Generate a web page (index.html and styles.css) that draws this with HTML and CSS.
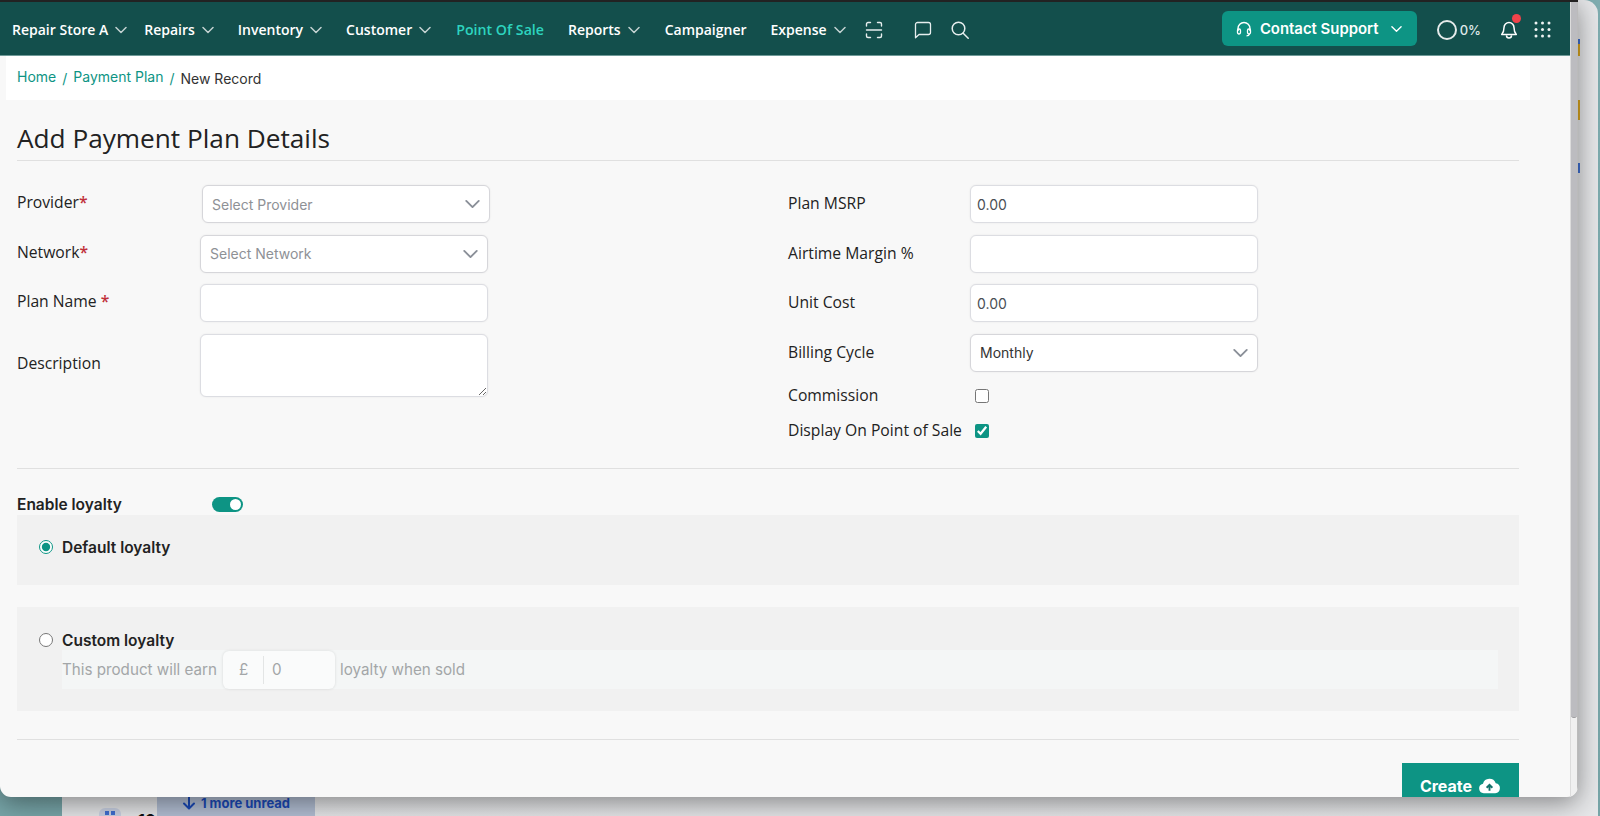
FILE: index.html
```html
<!DOCTYPE html>
<html lang="en">
<head>
<meta charset="utf-8">
<title>Add Payment Plan Details</title>
<link rel="stylesheet" href="styles.css">
</head>
<body>
<svg class="sprite" aria-hidden="true">
  <symbol id="chev" viewBox="0 0 12 8"><path d="M1 1.5 6 6.5 11 1.5" fill="none" stroke="currentColor" stroke-width="1.5" stroke-linecap="round" stroke-linejoin="round"/></symbol>
</svg>

<div class="backwin">
  <span class="tick tick-y1"></span><span class="tick tick-y2"></span><span class="tick tick-b1"></span><span class="tick tick-b2"></span>
  <div class="avatar"></div>
  <div class="count">10</div>
  <div class="unread">
    <svg class="unread-arrow" viewBox="0 0 14 14"><path d="M7 1v11M2 7.5 7 12.5 12 7.5" fill="none" stroke="currentColor" stroke-width="2" stroke-linecap="round" stroke-linejoin="round"/></svg>
    <span>1 more unread</span>
  </div>
</div>

<div class="window">
  <div class="main">
    <header class="topbar">
      <nav class="nav">
        <a class="nav-item nav-store">Repair Store A <svg class="chev"><use href="#chev"/></svg></a>
        <a class="nav-item">Repairs <svg class="chev"><use href="#chev"/></svg></a>
        <a class="nav-item">Inventory <svg class="chev"><use href="#chev"/></svg></a>
        <a class="nav-item">Customer <svg class="chev"><use href="#chev"/></svg></a>
        <a class="nav-item nav-active">Point Of Sale</a>
        <a class="nav-item">Reports <svg class="chev"><use href="#chev"/></svg></a>
        <a class="nav-item nav-campaigner">Campaigner</a>
        <a class="nav-item">Expense <svg class="chev"><use href="#chev"/></svg></a>
      </nav>
      <div class="tools">
        <svg class="tool tool-scan" viewBox="0 0 18 18"><path d="M1.500 5V3a1.500 1.500 0 0 1 1.500-1.500h2.500M12.500 1.500H15A1.500 1.500 0 0 1 16.500 3v2M1.500 9h15M1.500 13v2A1.500 1.500 0 0 0 3 16.500h2.500M12.500 16.500H15a1.500 1.500 0 0 0 1.500-1.500v-2" fill="none" stroke="currentColor" stroke-width="1.400" stroke-linecap="round"/></svg>
        <svg class="tool tool-chat" viewBox="0 0 18 18"><path d="M3.500 1.500h11a2 2 0 0 1 2 2v8a2 2 0 0 1-2 2H5L1.500 16.800V3.500a2 2 0 0 1 2-2Z" fill="none" stroke="currentColor" stroke-width="1.300" stroke-linejoin="round"/></svg>
        <svg class="tool tool-search" viewBox="0 0 18 18"><circle cx="7.500" cy="7.500" r="6.300" fill="none" stroke="currentColor" stroke-width="1.500"/><path d="m12.200 12.200 5 5" stroke="currentColor" stroke-width="1.500" stroke-linecap="round"/></svg>
      </div>
      <div class="right-tools">
        <button class="support">
          <svg class="support-ico" viewBox="0 0 16 16"><path d="M2 10V7.500a6 6 0 0 1 12 0V10" fill="none" stroke="currentColor" stroke-width="1.400"/><rect x="1.500" y="8" width="3" height="5" rx="1.400" fill="none" stroke="currentColor" stroke-width="1.300"/><rect x="11.500" y="8" width="3" height="5" rx="1.400" fill="none" stroke="currentColor" stroke-width="1.300"/><path d="M13.500 13c-.3 1.300-1.300 1.800-3 1.800" fill="none" stroke="currentColor" stroke-width="1.200"/></svg>
          <span>Contact Support</span>
          <svg class="chev chev-support"><use href="#chev"/></svg>
        </button>
        <div class="progress"><span class="ring"></span><span>0%</span></div>
        <div class="bell">
          <svg class="bell-ico" viewBox="0 0 18 20"><path d="M9 2.500a5 5 0 0 0-5 5c0 4-1 5.500-2.300 7h14.600C15 13 14 11.500 14 7.500a5 5 0 0 0-5-5ZM6.500 15.500a2.500 2.500 0 0 0 5 0" fill="none" stroke="currentColor" stroke-width="1.500" stroke-linejoin="round"/></svg>
          <span class="dot"></span>
        </div>
        <svg class="apps" viewBox="0 0 17 17" fill="currentColor"><circle cx="2" cy="2" r="1.500"/><circle cx="8.500" cy="2" r="1.500"/><circle cx="15" cy="2" r="1.500"/><circle cx="2" cy="8.500" r="1.500"/><circle cx="8.500" cy="8.500" r="1.500"/><circle cx="15" cy="8.500" r="1.500"/><circle cx="2" cy="15" r="1.500"/><circle cx="8.500" cy="15" r="1.500"/><circle cx="15" cy="15" r="1.500"/></svg>
      </div>
    </header>

    <div class="crumbs">
      <a>Home</a><i>/</i><a>Payment Plan</a><i>/</i><span>New Record</span>
    </div>

    <div class="content">
      <h1 class="title">Add Payment Plan Details</h1>

      <section class="form-grid">
        <div class="col col-left">
          <div class="row"><label class="lbl">Provider<b>*</b></label><div class="select select-provider placeholder">Select Provider<svg class="chev chev-sel"><use href="#chev"/></svg></div></div>
          <div class="row"><label class="lbl">Network<b>*</b></label><div class="select placeholder">Select Network<svg class="chev chev-sel"><use href="#chev"/></svg></div></div>
          <div class="row"><label class="lbl">Plan Name <b>*</b></label><input class="input" type="text"></div>
          <div class="row"><label class="lbl">Description</label><textarea class="input area"></textarea></div>
        </div>
        <div class="col col-right">
          <div class="row"><label class="lbl">Plan MSRP</label><input class="input" type="text" value="0.00"></div>
          <div class="row"><label class="lbl">Airtime Margin %</label><input class="input" type="text"></div>
          <div class="row"><label class="lbl">Unit Cost</label><input class="input" type="text" value="0.00"></div>
          <div class="row"><label class="lbl">Billing Cycle</label><div class="select value">Monthly<svg class="chev chev-sel"><use href="#chev"/></svg></div></div>
          <div class="row row-check row-commission"><label class="lbl">Commission</label><input class="check" type="checkbox"></div>
          <div class="row row-check"><label class="lbl">Display On Point of Sale</label><input class="check" type="checkbox" checked></div>
        </div>
      </section>

      <section class="loyalty">
        <div class="enable">
          <span class="enable-lbl">Enable loyalty</span>
          <span class="toggle"><span class="knob"></span></span>
        </div>
        <div class="panel panel-default">
          <label class="radio-row"><input class="radio" type="radio" name="loyalty" checked><span>Default loyalty</span></label>
        </div>
        <div class="panel panel-custom">
          <label class="radio-row"><input class="radio" type="radio" name="loyalty"><span>Custom loyalty</span></label>
          <div class="earn">
            <span>This product will earn</span>
            <div class="earn-input"><span class="cur">£</span><span class="earn-val">0</span></div>
            <span>loyalty when sold</span>
          </div>
        </div>
      </section>

      <div class="actions">
        <button class="create">Create
          <svg class="cloud" viewBox="0 0 24 16"><path d="M6 15.500a5 5 0 0 1-.8-9.900A7 7 0 0 1 18.500 5a5.300 5.300 0 0 1-.5 10.500Z" fill="#fff"/><path d="M12 13V7.500M9 9.800 12 6.800 15 9.800" fill="none" stroke="#14716b" stroke-width="2"/></svg>
        </button>
      </div>
    </div>
  </div>
  <div class="scrollbar"><div class="thumb"></div></div>
</div>
</body>
</html>
```

FILE: styles.css
```css
* { box-sizing: border-box; }
html, body { margin: 0; height: 100%; }
body {
  position: relative;
  height: 816px;
  overflow: hidden;
  background: linear-gradient(#7fadb0, #77a5a8);
  font-family: "Open Sans", "Liberation Sans", sans-serif;
  color: #212529;
}
.sprite { display: none; }

/* desktop behind */
.backwin {
  position: absolute;
  left: 62px; top: 0; width: 1536px; height: 840px;
  background: linear-gradient(90deg, #e4e5e7, #e6e7e9);
  border-radius: 14px;
  overflow: hidden;
}
.tick { position: absolute; left: 1516px; width: 2px; }
.tick-y1 { top: 44px; height: 12px; background: #d9a520; }
.tick-y2 { top: 100px; height: 20px; background: #d9a520; }
.tick-b1 { top: 39px; height: 5px; background: #3f6fd0; }
.tick-b2 { top: 163px; height: 10px; background: #3f6fd0; }
.avatar { position: absolute; left: 37px; top: 808px; width: 22px; height: 22px; border-radius: 6px; background: #c8d0e2; }
.avatar::before { content: ""; position: absolute; left: 6px; top: 3px; width: 4px; height: 4px; background: #3f6fd0; box-shadow: 6px 0 #3f6fd0; }
.count { position: absolute; left: 76px; top: 810px; font: 700 16px/20px Inter, sans-serif; color: #111; }
.unread {
  position: absolute; left: 95px; top: 780px; width: 158px; height: 36px;
  background: #b2bed3; color: #1a4ab8;
  display: flex; align-items: center; justify-content: center; gap: 5px;
  padding-top: 10px;
  font: 700 13px/16px Inter, sans-serif;
}
.unread-arrow { width: 14px; height: 14px; }

/* front window */
.window {
  position: absolute;
  left: 0; top: 0; width: 1578px; height: 797px;
  display: flex;
  background: #f8f8f8;
  border-radius: 0 0 11px 11px;
  border-top: 2px solid #222;
  overflow: hidden;
  box-shadow: 0 6px 26px rgba(0,0,0,.42);
}
.main { width: 1570px; flex: none; display: flex; flex-direction: column; }
.scrollbar { flex: 1; background: #f0f0f0; border-left: 1px solid #dcdcdc; border-right: 1px solid #bbb; }
.thumb { height: 716px; background: #bcbcc0; border-radius: 0 0 5px 5px; border-bottom: 1px solid #9a9a9e; }

/* top bar */
.topbar {
  height: 54px; flex: none;
  background: #134f4c;
  border-bottom: 1px solid #6f9a98;
  display: flex; align-items: center;
  padding: 2px 19.500px 0 12px;
  color: #fff;
}
.nav { display: flex; align-items: center; gap: 24px; font-size: 14px; font-weight: 600; }
.nav-item { display: flex; align-items: center; gap: 7px; white-space: nowrap; color: #fff; }
.nav-store { margin-right: -7px; }
.nav-active { color: #2dd4bf; margin-left: 1px; font-size: 14.200px; font-weight: 600; }
.nav-campaigner { margin-left: 1px; }
.chev { width: 12px; height: 8px; color: #c3d2d1; }
.tools { display: flex; align-items: center; margin-left: 19px; color: #e6eeee; }
.tool { width: 18px; height: 18px; }
.tool-chat { margin-left: 31px; }
.tool-search { margin-left: 19px; }
.right-tools { margin-left: auto; display: flex; align-items: center; }
.support {
  width: 195px; height: 35px;
  background: #0d9484; color: #fff;
  border: 0; border-radius: 6px;
  display: flex; align-items: center; justify-content: center; gap: 8px;
  font: 600 14.900px Inter, sans-serif;
  margin-top: -2px;
}
.support-ico { width: 16px; height: 16px; }
.chev-support { color: #fff; margin-left: 5px; width: 11px; }
.progress { display: flex; align-items: center; gap: 3px; margin-left: 20px; font: 500 13px Inter, sans-serif; color: #dfe8e8; }
.ring { width: 20px; height: 20px; border: 2px solid #e4eaea; border-radius: 50%; }
.bell { position: relative; width: 18px; height: 20px; margin-left: 19px; }
.bell-ico { width: 18px; height: 20px; color: #fff; display: block; }
.dot { position: absolute; right: -3px; top: -6px; width: 9px; height: 9px; background: #f0434a; border-radius: 50%; }
.apps { width: 17px; height: 17px; margin-left: 15.500px; color: #eef3f3; }

/* breadcrumb */
.crumbs {
  margin-left: 6px; width: 1524px; height: 44px; flex: none;
  background: #fff;
  display: flex; align-items: center;
  padding: 1px 0 1px 11px;
  font: 400 14px Inter, sans-serif;
}
.crumbs a { color: #0d9484; margin-top: -3px; }
.crumbs i { font-style: normal; color: #0d9484; margin: 0 6px; }
.crumbs span { color: #333; }

/* content */
.content { width: 1519px; padding-left: 17px; }
.title {
  margin: 0; height: 61px; padding-top: 20px;
  font-size: 26.200px; line-height: 36px; font-weight: 400; color: #222;
  border-bottom: 1px solid #e0e0e0;
}
.form-grid {
  display: grid; grid-template-columns: 771px 470px;
  padding: 24px 0 30px;
  border-bottom: 1px solid #e0e0e0;
  height: 308px;
}
.col { display: flex; flex-direction: column; gap: 11.500px; }
.row { display: flex; align-items: center; }
.lbl { width: 183px; flex: none; font-size: 15.700px; font-weight: 500; color: #222; }
.col-left .lbl { padding-bottom: 4px; }
.col-right .lbl { width: 182px; padding-bottom: 2px; }
.lbl b { color: #c0303a; font-weight: 600; }
.input, .select {
  width: 288px; height: 38px;
  background: #fff;
  border: 1px solid #dcdde2;
  border-radius: 6px;
  box-shadow: 0 0 2px rgba(0,0,0,.08);
  outline: 0;
  font: 400 14px Inter, sans-serif;
  color: #4a4f55;
  padding: 0 6px;
}
.area { height: 63px; display: block; resize: vertical; }
.select { display: flex; align-items: center; justify-content: space-between; padding: 0 9px; border-color: #d6d6da; }
.select-provider { margin-left: 2px; }
.placeholder { color: #8e9196; font-size: 14px; }
.value { color: #333; font-size: 14px; }
.chev-sel { width: 15px; height: 10px; color: #8a8f98; }
.row-check { height: 16px; }
.col-right .row-check .lbl { padding-bottom: 0; white-space: nowrap; }
.row-commission { margin-top: 4px; margin-bottom: 7px; }
.check { width: 14px; height: 14px; margin: 2px 0 0 5px; accent-color: #0d9484; }

/* loyalty */
.enable { height: 21px; margin-top: 25px; display: flex; align-items: center; }
.enable-lbl { width: 195px; font: 600 15.500px Inter, sans-serif; color: #222; }
.toggle { width: 31px; height: 15px; background: #0d9484; border-radius: 8px; display: flex; justify-content: flex-end; align-items: center; padding-right: 2px; }
.knob { width: 11px; height: 11px; background: #fff; border-radius: 50%; }
.panel { background: #f1f1f1; padding: 22px 21px 0 22px; }
.panel-default { height: 70px; }
.panel-custom { height: 104px; margin-top: 22px; padding-top: 23px; }
.radio-row { height: 20px; display: flex; align-items: center; gap: 9px; font: 600 15.500px Inter, sans-serif; color: #222; }
.radio { width: 14px; height: 14px; margin: 0; accent-color: #0d9484; }
.earn {
  height: 39px; margin-left: 23px;
  background: #f4f6f6;
  display: flex; align-items: center; gap: 5px;
  font: 400 15.200px Inter, sans-serif; color: #a3a6a8;
}
.earn-input {
  width: 112px; height: 38px; margin-left: 1px;
  background: #fafbfb;
  border-radius: 6px;
  box-shadow: 0 0 3px rgba(0,0,0,.12);
  display: flex; align-items: center;
}
.cur { width: 41px; height: 28px; line-height: 28px; padding-left: 16px; border-right: 1px solid #e3e5e5; }
.earn-val { padding-left: 8px; }

/* footer */
.actions { margin-top: 28px; border-top: 1px solid #e0e0e0; padding-top: 23px; display: flex; justify-content: flex-end; }
.create {
  width: 117px; height: 46px;
  background: #0d9484; color: #fff;
  border: 0;
  display: flex; align-items: center; justify-content: center; gap: 6px;
  font: 700 16px Inter, sans-serif;
  padding: 0;
}
.cloud { width: 23px; height: 16px; }
```
